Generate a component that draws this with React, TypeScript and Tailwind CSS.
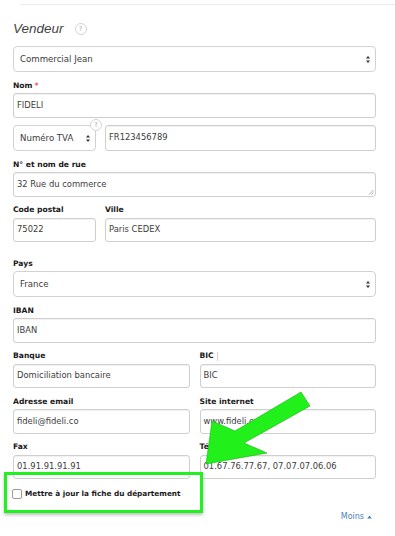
import React from "react";

const font = { fontFamily: '"DejaVu Sans", Verdana, sans-serif' };

function Help({ className = "" }: { className?: string }) {
  return (
    <span
      className={`flex h-[12px] w-[12px] items-center justify-center rounded-full border border-[#d4d4d4] bg-white text-[7px] leading-none text-[#aaa] ${className}`}
    >
      ?
    </span>
  );
}

function Label({ children, required }: { children: React.ReactNode; required?: boolean }) {
  return (
    <div className="mb-[1px] mt-[7px] flex h-[13px] items-center text-[7.6px] font-bold text-[#1a1a1a]">
      {children}
      {required && <span className="ml-[2px] text-[#d9534f]">*</span>}
    </div>
  );
}

function Input({ value, className = "" }: { value: string; className?: string }) {
  return (
    <div
      className={`flex h-[24.5px] items-center rounded-[3px] border border-[#cfcfcf] bg-white px-[3px] text-[8.4px] text-[#3c3c3c] shadow-[inset_0_1px_1px_rgba(0,0,0,0.06)] ${className}`}
    >
      {value}
    </div>
  );
}

function Arrows() {
  return (
    <svg width="6" height="9" viewBox="0 0 6 9" className="shrink-0">
      <path d="M3 1 L5 3.5 L1 3.5 Z" fill="#333" />
      <path d="M3 8 L5 5.5 L1 5.5 Z" fill="#333" />
    </svg>
  );
}

function Select({ value, className = "" }: { value: string; className?: string }) {
  return (
    <div
      className={`flex h-[26px] items-center justify-between rounded-[4px] border border-[#d2d2d2] bg-white pl-[6px] pr-[4px] text-[8.6px] text-[#3c3c3c] ${className}`}
    >
      <span>{value}</span>
      <Arrows />
    </div>
  );
}

export default function App() {
  return (
    <div className="relative h-[536px] w-[395px] overflow-hidden bg-white" style={font}>
      <div className="ml-[20px] mt-[4px] h-px bg-[#ececec]" />

      <div className="pl-[13px] pr-[19px]">
        <div className="mt-[14px] flex h-[20px] items-center gap-[11px]">
          <span
            className="text-[13.5px] italic text-[#444]"
            style={{ fontFamily: '"Liberation Sans", Arial, sans-serif' }}
          >
            Vendeur
          </span>
          <Help />
        </div>

        <Select value="Commercial Jean" className="mt-[7px]" />

        <Label required>Nom</Label>
        <Input value="FIDELI" />

        <div className="mt-[7.5px] flex gap-[9px]">
          <div className="relative w-[83px] shrink-0">
            <Select value="Numéro TVA" className="h-[25.5px]" />
            <Help className="absolute -right-[6px] -top-[6px]" />
          </div>
          <Input value="FR123456789" className="h-[25.5px] flex-1" />
        </div>

        <Label>N° et nom de rue</Label>
        <div className="relative">
          <Input value="32 Rue du commerce" className="h-[23px]" />
          <svg width="6" height="6" viewBox="0 0 6 6" className="absolute bottom-[2px] right-[2px]">
            <path d="M1 5.5 L5.5 1 M3.5 5.5 L5.5 3.5" stroke="#999" strokeWidth="0.8" />
          </svg>
        </div>

        <div className="flex gap-[9px]">
          <div className="w-[83px] shrink-0">
            <Label>Code postal</Label>
            <Input value="75022" />
          </div>
          <div className="flex-1">
            <Label>Ville</Label>
            <Input value="Paris CEDEX" />
          </div>
        </div>

        <div className="mt-[15px]">
          <Label>Pays</Label>
        </div>
        <Select value="France" className="h-[25.5px]" />

        <Label>IBAN</Label>
        <Input value="IBAN" />

        <div className="grid grid-cols-2 gap-x-[10px]">
          <div>
            <Label>Banque</Label>
            <Input value="Domiciliation bancaire" />
          </div>
          <div>
            <Label>
              BIC<span className="ml-[3px] h-[9px] w-px bg-[#f0c8c8]" />
            </Label>
            <Input value="BIC" />
          </div>
          <div>
            <Label>Adresse email</Label>
            <Input value="fideli@fideli.co" />
          </div>
          <div>
            <Label>Site internet</Label>
            <Input value="www.fideli.co" />
          </div>
          <div>
            <Label>Fax</Label>
            <Input value="01.91.91.91.91" />
          </div>
          <div>
            <Label>Téléphone</Label>
            <Input value="01.67.76.77.67, 07.07.07.06.06" />
          </div>
        </div>

        <div className="mt-[9px] flex h-[12px] items-center gap-[3px]">
          <span className="-ml-[1px] h-[10px] w-[10px] rounded-[2px] border border-[#9a9a9a] bg-white" />
          <span className="text-[7.3px] font-bold text-[#1a1a1a]">Mettre à jour la fiche du département</span>
        </div>

        <div className="mt-[11px] flex justify-end pr-[4px]">
          <span className="flex items-center gap-[3px] text-[8px] text-[#4a7fc0]">
            Moins
            <svg width="5" height="4" viewBox="0 0 5 4">
              <path d="M2.5 0.5 L4.8 3.5 L0.2 3.5 Z" fill="#4a7fc0" />
            </svg>
          </span>
        </div>
      </div>

      <div className="pointer-events-none absolute left-[4px] top-[472px] h-[41px] w-[199px] border-[3px] border-[#1ff21f] shadow-[0_2px_3px_rgba(0,0,0,0.25)]" />

      <svg
        className="pointer-events-none absolute left-0 top-0"
        width="395"
        height="536"
        viewBox="0 0 395 536"
      >
        <polygon
          points="301,392 310,406 244,443 267,453 206,464 212,421 235,431"
          fill="#22f01a"
          stroke="#15b012"
          strokeWidth="0.6"
          strokeLinejoin="round"
        />
      </svg>
    </div>
  );
}
